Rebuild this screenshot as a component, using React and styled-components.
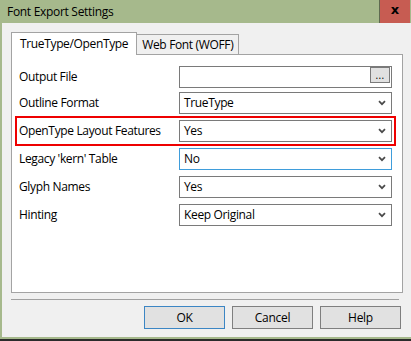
import React from "react";
import styled, { createGlobalStyle } from "styled-components";

const GlobalStyle = createGlobalStyle`
  html, body { margin: 0; padding: 0; background: #f0f0f0; }
  body {
    font-family: "Open Sans", "Noto Sans", "Liberation Sans", sans-serif;
    font-size: 12px;
    color: #000;
  }
`;

const Window = styled.div`
  width: 411px;
  height: 341px;
  display: flex;
  flex-direction: column;
  background: #2b2b2b;
  overflow: hidden;
`;

const TitleBar = styled.div`
  flex: none;
  height: 23px;
  display: flex;
  align-items: stretch;
  background: #a6b98c;
`;

const Title = styled.div`
  flex: 1;
  display: flex;
  align-items: center;
  padding-left: 7px;
  font-size: 12px;
  letter-spacing: -0.3px;
  padding-bottom: 1px;
`;

const CloseButton = styled.div`
  width: 31px;
  margin-right: 1px;
  display: flex;
  align-items: center;
  justify-content: center;
  background: #c75c52;
  border-left: 1px solid #5e6a50;
  font-family: "DejaVu Sans", sans-serif;
  font-weight: bold;
  font-size: 13px;
  line-height: 1;
  padding-bottom: 4px;
  box-sizing: border-box;
`;

const Body = styled.div`
  flex: 1;
  display: flex;
  flex-direction: column;
  background: #f0f0f0;
  border-left: 2px solid #a6b98c;
  border-bottom: 2px solid #a6b98c;
  margin-bottom: 2px;
  padding: 9px 8px 0 9px;
`;

const TabStrip = styled.div`
  display: flex;
  align-items: flex-end;
  height: 22px;
`;

const Tab = styled.div`
  box-sizing: border-box;
  display: flex;
  align-items: ${(p) => (p.$active ? "flex-start" : "center")};
  border: 1px solid #a3a3a3;
  border-bottom: none;
  letter-spacing: -0.35px;
  white-space: nowrap;
  background: ${(p) => (p.$active ? "#fff" : "#f0f0f0")};
  height: ${(p) => (p.$active ? "23px" : "20px")};
  padding: ${(p) => (p.$active ? "2px 8px 0 8px" : "0 5px 1px 5px")};
  margin-bottom: ${(p) => (p.$active ? "-1px" : "0")};
  margin-left: ${(p) => (p.$active ? "0" : "-1px")};
  position: relative;
  z-index: ${(p) => (p.$active ? 2 : 1)};
`;

const Panel = styled.div`
  box-sizing: border-box;
  width: 392px;
  height: 239px;
  background: #fff;
  border: 1px solid #a3a3a3;
  padding: 11px 0 0 7px;
  display: flex;
  flex-direction: column;
  gap: 6px;
`;

const Row = styled.div`
  display: flex;
  align-items: center;
  width: 373px;
  height: 22px;
  margin-bottom: ${(p) => (p.$tight ? "-2px" : "0")};
  outline: ${(p) => (p.$highlight ? "2px solid #ee0000" : "none")};
  outline-offset: 2px;
`;

const Label = styled.div`
  width: 160px;
  flex: none;
  letter-spacing: -0.35px;
  white-space: nowrap;
  padding-bottom: 1px;
`;

const SelectBox = styled.div`
  box-sizing: border-box;
  width: 213px;
  height: 22px;
  display: flex;
  align-items: center;
  background: #fff;
  border: 1px solid ${(p) => (p.$focused ? "#3f9ddb" : "#7a7a7a")};
  padding: 0 4px 1px 4px;
`;

const Value = styled.div`
  flex: 1;
  letter-spacing: -0.35px;
  white-space: nowrap;
`;

const FileBox = styled.div`
  box-sizing: border-box;
  width: 213px;
  height: 22px;
  display: flex;
  justify-content: flex-end;
  align-items: flex-start;
  background: #fff;
  border: 1px solid #7a7a7a;
  padding-right: 1px;
`;

const BrowseButton = styled.div`
  box-sizing: border-box;
  width: 20px;
  height: 16px;
  background: #e1e1e1;
  border: 1px solid #7a7a7a;
  display: flex;
  justify-content: center;
  align-items: flex-end;
  font-size: 10px;
  line-height: 1;
  padding-bottom: 2px;
  letter-spacing: 0.3px;
`;

const Separator = styled.div`
  height: 1px;
  width: 388px;
  margin-top: 6px;
  background: #a0a0a0;
`;

const ButtonRow = styled.div`
  display: flex;
  justify-content: flex-end;
  gap: 7px;
  margin-top: 6px;
  padding-right: 2px;
`;

const Button = styled.div`
  box-sizing: border-box;
  width: 81px;
  height: 23px;
  display: flex;
  align-items: center;
  justify-content: center;
  background: #e1e1e1;
  border: 1px solid ${(p) => (p.$default ? "#3c86c4" : "#7f7f7f")};
  letter-spacing: -0.3px;
  padding-bottom: 1px;
`;

const Chevron = () => (
  <svg width="8" height="6" viewBox="0 0 8 6" style={{ flex: "none", marginRight: "1px" }}>
    <path d="M1 1.2 L4 4.2 L7 1.2" fill="none" stroke="#4a4a4a" strokeWidth="1.7" />
  </svg>
);

const Select = ({ value, focused }) => (
  <SelectBox $focused={focused}>
    <Value>{value}</Value>
    <Chevron />
  </SelectBox>
);

const rows = [
  { label: "Outline Format", value: "TrueType" },
  { label: "OpenType Layout Features", value: "Yes", highlight: true },
  { label: "Legacy 'kern' Table", value: "No", focused: true },
  { label: "Glyph Names", value: "Yes" },
  { label: "Hinting", value: "Keep Original" },
];

export default function App() {
  return (
    <>
      <GlobalStyle />
      <Window>
        <TitleBar>
          <Title>Font Export Settings</Title>
          <CloseButton>x</CloseButton>
        </TitleBar>
        <Body>
          <TabStrip>
            <Tab $active>TrueType/OpenType</Tab>
            <Tab>Web Font (WOFF)</Tab>
          </TabStrip>
          <Panel>
            <Row $tight>
              <Label>Output File</Label>
              <FileBox>
                <BrowseButton>...</BrowseButton>
              </FileBox>
            </Row>
            {rows.map((r) => (
              <Row key={r.label} $highlight={r.highlight}>
                <Label>{r.label}</Label>
                <Select value={r.value} focused={r.focused} />
              </Row>
            ))}
          </Panel>
          <Separator />
          <ButtonRow>
            <Button $default>OK</Button>
            <Button>Cancel</Button>
            <Button>Help</Button>
          </ButtonRow>
        </Body>
      </Window>
    </>
  );
}
